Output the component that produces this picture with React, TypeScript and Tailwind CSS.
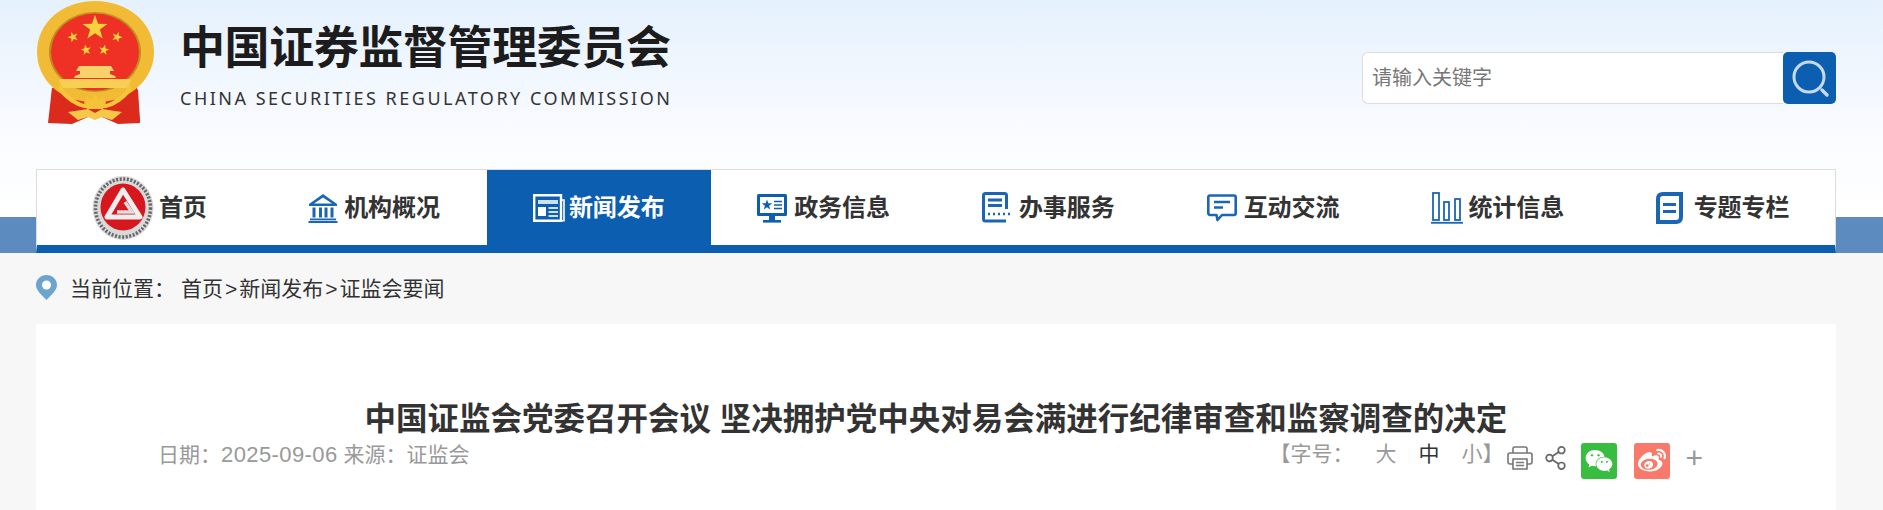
import React from "react";
import { FaWeixin, FaWeibo } from "react-icons/fa";

const BLUE = "#0c5eb0";

function starPoints(cx: number, cy: number, r: number, rot = 0) {
  const pts: string[] = [];
  for (let i = 0; i < 10; i++) {
    const rad = i % 2 === 0 ? r : r * 0.4;
    const a = ((-90 + rot + i * 36) * Math.PI) / 180;
    pts.push(`${(cx + rad * Math.cos(a)).toFixed(1)},${(cy + rad * Math.sin(a)).toFixed(1)}`);
  }
  return pts.join(" ");
}

function Emblem() {
  return (
    <svg width="119" height="124" viewBox="36 0 119 124" className="shrink-0">
      <path d="M52 88 L48 123 L72 124 L95 114 L118 124 L140 123 L137 88 Z" fill="#dc2a1c" />
      <path d="M95 1 C127 1 154 22 154 52 C154 74 138 92 118 99 L95 104 L72 99 C52 92 37 74 37 52 C37 22 63 1 95 1 Z" fill="#f2bb35" />
      <ellipse cx="95" cy="52" rx="46" ry="40" fill="#bf8d22" />
      <ellipse cx="95" cy="52" rx="44" ry="38.5" fill="#ee3124" />
      <polygon points={starPoints(95, 28, 13)} fill="#f8d23c" />
      <polygon points={starPoints(73, 37, 5.5, -20)} fill="#f8d23c" />
      <polygon points={starPoints(117, 37, 5.5, 20)} fill="#f8d23c" />
      <polygon points={starPoints(86, 50, 5.5, -10)} fill="#f8d23c" />
      <polygon points={starPoints(104, 50, 5.5, 10)} fill="#f8d23c" />
      <path d="M79 66 L111 66 L114 71 L110 71 L110 74 L115 76 L116 78 L74 78 L75 76 L80 74 L80 71 L76 71 Z" fill="#f7d16a" />
      <path d="M60 79 H130 L131 81 L127 88 H63 L59 81 Z" fill="#f7cf55" />
      <path d="M60 84 Q68 98 84 104 H106 Q122 98 130 84 L132 90 Q120 105 106 108 H84 Q70 105 58 90 Z" fill="#f6c53a" />
      <path d="M52 89 Q60 101 76 107 L70 122 L50 122 Z" fill="#dc2a1c" />
      <path d="M138 89 Q130 101 114 107 L120 122 L140 122 Z" fill="#dc2a1c" />
      <path d="M84 103 L87 97 L91 100 L95 95 L99 100 L103 97 L106 103 L103 109 H87 Z" fill="#f5c23a" />
      <path d="M68 112 L88 109 L95 113 L102 109 L122 112 L112 120 L102 117 L95 120 L88 117 L78 120 Z" fill="#f5c84a" />
    </svg>
  );
}

function SealIcon() {
  return (
    <svg width="62" height="64" viewBox="0 0 62 64" className="shrink-0">
      <ellipse cx="31" cy="32" rx="30.5" ry="32" fill="#d9d9d9" />
      <ellipse cx="31" cy="32" rx="27.5" ry="29" fill="none" stroke="#666" strokeWidth="3.5" strokeDasharray="2 1.6" />
      <ellipse cx="31" cy="31" rx="22.5" ry="23.5" fill="#d7161e" />
      <path d="M31 14 L48 41 L15 41 Z" fill="none" stroke="#eeeeee" strokeWidth="5" strokeLinejoin="round" />
      <path d="M33 26 L40 36 H25" fill="none" stroke="#dcdcdc" strokeWidth="3.5" />
    </svg>
  );
}

function IconBank() {
  return (
    <svg width="30" height="30" viewBox="0 0 30 30" className="shrink-0" fill="#1a66b5">
      <path d="M15 1 L29 11 V13 H1 V11 Z M15 4.5 L6 10.5 H24 Z" fillRule="evenodd" />
      <rect x="4.5" y="14.5" width="3" height="10" />
      <rect x="11" y="14.5" width="3" height="10" />
      <rect x="16.5" y="14.5" width="3" height="10" />
      <rect x="22.5" y="14.5" width="3" height="10" />
      <rect x="2" y="25.5" width="26" height="1.8" />
      <rect x="0.5" y="28" width="29" height="2" />
    </svg>
  );
}

function IconNews() {
  return (
    <svg width="32" height="28" viewBox="0 0 32 28" className="shrink-0" fill="none" stroke="#fff">
      <path d="M1.2 1.2 H28 V26.8 H1.2 Z" strokeWidth="2.4" />
      <path d="M28 6 H31 V26.8 H28" strokeWidth="1.6" />
      <rect x="5" y="6" width="20" height="4" fill="#cfe0f2" stroke="none" />
      <rect x="5" y="13" width="8" height="9" fill="#fff" stroke="none" />
      <path d="M15.5 14 H25 M15.5 18 H25 M15.5 22 H25" strokeWidth="2" stroke="#cfe0f2" />
    </svg>
  );
}

function IconGov() {
  return (
    <svg width="30" height="30" viewBox="0 0 30 30" className="shrink-0">
      <rect x="0" y="1" width="30" height="22" rx="1.5" fill={BLUE} />
      <rect x="3" y="4" width="24" height="16" fill="#fff" />
      <polygon points={starPoints(10, 12, 5.5)} fill={BLUE} />
      <path d="M17 8.5 H25 M17 12 H25 M17 15.5 H25" stroke={BLUE} strokeWidth="1.7" />
      <rect x="12" y="23" width="6" height="4" fill={BLUE} />
      <rect x="6" y="27" width="18" height="2.6" fill={BLUE} />
    </svg>
  );
}

function IconService() {
  return (
    <svg width="30" height="31" viewBox="0 0 30 31" className="shrink-0" fill="none">
      <path d="M24.5 17 V3.5 Q24.5 1.5 22.5 1.5 H3.5 Q1.5 1.5 1.5 3.5 V27 Q1.5 29 3.5 29 H24" stroke="#1a66b5" strokeWidth="3" />
      <path d="M6 8 H20 M6 13.5 H20" stroke="#1a66b5" strokeWidth="3" />
      <path d="M6 22 H8 M11 22 H13 M16 22 H18 M21 22 H23 M26 22 H28" stroke="#1a66b5" strokeWidth="2.6" />
    </svg>
  );
}

function IconChat() {
  return (
    <svg width="30" height="28" viewBox="0 0 30 28" className="shrink-0" fill="none">
      <path d="M3 1.5 H27 Q28.7 1.5 28.7 3.2 V19 Q28.7 21 27 21 H15 L10.5 26 L9.5 21 H3 Q1.3 21 1.3 19 V3.2 Q1.3 1.5 3 1.5 Z" stroke="#1a66b5" strokeWidth="2.6" strokeLinejoin="round" />
      <path d="M7 8 H23 M7 13.5 H16" stroke="#1a66b5" strokeWidth="2.4" />
    </svg>
  );
}

function IconStats() {
  return (
    <svg width="32" height="32" viewBox="0 0 32 32" className="shrink-0" fill="none" stroke="#1a66b5">
      <rect x="2" y="1" width="6" height="27" strokeWidth="1.8" />
      <rect x="13" y="10" width="5" height="18" strokeWidth="1.8" />
      <rect x="24" y="7" width="5" height="21" strokeWidth="1.8" />
      <path d="M0 30.8 H32" strokeWidth="1.8" />
    </svg>
  );
}

function IconDoc() {
  return (
    <svg width="27" height="32" viewBox="0 0 27 32" className="shrink-0" fill="none">
      <path d="M7 2 H25 V25 Q25 30 20 30 H2 V7 Q2 2 7 2 Z" stroke="#1a66b5" strokeWidth="4" />
      <path d="M7 12.5 H20 M7 19.5 H20" stroke="#1a66b5" strokeWidth="3" />
    </svg>
  );
}

function PinIcon() {
  return (
    <svg width="21" height="25" viewBox="0 0 21 25" className="shrink-0">
      <path d="M10.5 0 C4.5 0 0 4.5 0 10 C0 16 7 21 10.5 25 C14 21 21 16 21 10 C21 4.5 16.5 0 10.5 0 Z" fill="#6da3cf" />
      <circle cx="10.5" cy="10" r="4.5" fill="#ffffff" />
    </svg>
  );
}

function PrinterIcon() {
  return (
    <svg width="26" height="24" viewBox="0 0 26 24" fill="none" stroke="#777" strokeWidth="1.6" className="shrink-0">
      <path d="M6 7 V2.5 Q6 1 7.5 1 H18.5 Q20 1 20 2.5 V7" />
      <path d="M6 18 H3 Q1 18 1 16 V9 Q1 7 3 7 H23 Q25 7 25 9 V16 Q25 18 23 18 H20" />
      <path d="M6 13 H20 V23 H6 Z M9 16.5 H17 M9 19.5 H17" />
    </svg>
  );
}

function ShareIcon() {
  return (
    <svg width="21" height="24" viewBox="0 0 21 24" fill="none" stroke="#666" strokeWidth="1.7" className="shrink-0">
      <circle cx="4.5" cy="12" r="3.3" />
      <circle cx="16.5" cy="4.2" r="3.3" />
      <circle cx="16.5" cy="19.8" r="3.3" />
      <path d="M7.4 10.2 L13.7 6 M7.4 13.8 L13.7 18" />
    </svg>
  );
}

const navItems: { label: string; icon: React.ReactNode; gap: string }[] = [
  { label: "首页", icon: <SealIcon />, gap: "gap-[5px]" },
  { label: "机构概况", icon: <IconBank />, gap: "gap-[6px]" },
  { label: "新闻发布", icon: <IconNews />, gap: "gap-[4px]" },
  { label: "政务信息", icon: <IconGov />, gap: "gap-[7px]" },
  { label: "办事服务", icon: <IconService />, gap: "gap-[7px]" },
  { label: "互动交流", icon: <IconChat />, gap: "gap-[7px]" },
  { label: "统计信息", icon: <IconStats />, gap: "gap-[5px]" },
  { label: "专题专栏", icon: <IconDoc />, gap: "gap-[11px]" },
];

export default function App() {
  return (
    <div className="h-[510px] overflow-hidden bg-[#f7f7f7] font-['Liberation_Sans','Noto_Sans_CJK_SC',sans-serif] text-[#333]">
      <header className="h-[253px] pl-[36px] pr-[47px] bg-[linear-gradient(to_bottom,#e5f1fd_0,#f9fbff_130px,#ffffff_217px,#5c8bbf_217px,#5c8bbf_253px)]">
        <div className="flex h-[169px] items-start justify-between">
          <div className="flex items-start">
            <Emblem />
            <div className="ml-[25px] flex flex-col">
              <div className="mt-[15px] text-[45px] leading-[60px] tracking-[-0.4px] font-bold text-[#1c1c1c] font-['Noto_Sans_CJK_SC',sans-serif] whitespace-nowrap">
                中国证券监督管理委员会
              </div>
              <div className="mt-[11px] text-[18px] leading-[24px] tracking-[2.5px] text-[#333] font-['Noto_Sans',sans-serif] whitespace-nowrap">
                CHINA SECURITIES REGULATORY COMMISSION
              </div>
            </div>
          </div>
          <div className="mt-[52px] flex h-[52px] w-[474px]">
            <div className="flex flex-1 items-center rounded-l-[6px] border border-r-0 border-[#dcdcdc] bg-white pl-[9px] text-[20px] text-[#777]">
              请输入关键字
            </div>
            <div className="flex w-[53px] items-center justify-center rounded-[5px] bg-[#0c5eb0]">
              <svg width="40" height="40" viewBox="0 0 40 40" fill="none">
                <circle cx="19" cy="19" r="15" stroke="#c6d9ee" strokeWidth="3" />
                <path d="M32 32 L37 37" stroke="#c6d9ee" strokeWidth="3.5" strokeLinecap="round" />
              </svg>
            </div>
          </div>
        </div>
        <nav className="flex h-[84px] border-x border-t border-[#dcdcdc] bg-white border-b-[8px] border-b-[#0c5eb0]">
          {navItems.map((item, i) => (
            <a
              key={item.label}
              className={`flex flex-1 items-center justify-center text-[24px] font-bold ${item.gap} ${i === 2 ? "bg-[#0c5eb0] text-white" : "text-[#333]"}`}
            >
              {item.icon}
              <span className="whitespace-nowrap">{item.label}</span>
            </a>
          ))}
        </nav>
      </header>

      <div className="flex h-[71px] items-start px-[36px] pt-[22px] text-[21px] leading-[28px] text-[#333]">
        <PinIcon />
        <span className="ml-[13px]">当前位置：</span>
        <span className="ml-[6px]">
          首页<span className="mx-[2px]">&gt;</span>新闻发布<span className="mx-[2px]">&gt;</span>证监会要闻
        </span>
      </div>

      <main className="ml-[36px] mr-[47px] h-[300px] bg-white pt-[75px]">
        <h1 className="text-center text-[31.5px] leading-[40px] font-bold text-[#333]">
          中国证监会党委召开会议 坚决拥护党中央对易会满进行纪律审查和监察调查的决定
        </h1>
        <div className="flex h-[30px] items-center justify-between pl-[122px] pr-[133px] text-[21px] text-[#999]">
          <span>
            日期：<span className="text-[22px] tracking-[0.4px]">2025-09-06</span> 来源：证监会
          </span>
          <div className="flex items-center">
            <span>【字号：</span>
            <span className="ml-[22px]">大</span>
            <span className="ml-[22px] text-[#333]">中</span>
            <span className="ml-[22px]">小</span>
            <span>】</span>
            <span className="ml-[4px] translate-y-[4px]"><PrinterIcon /></span>
            <span className="ml-[12px] translate-y-[4px]"><ShareIcon /></span>
            <span className="ml-[15px] flex h-[36px] w-[36px] translate-y-[7px] items-center justify-center rounded-[3px] bg-[#38bd41] text-white"><FaWeixin size={28} /></span>
            <span className="ml-[17px] flex h-[36px] w-[36px] translate-y-[7px] items-center justify-center rounded-[3px] bg-[#f9796a] text-white"><FaWeibo size={28} /></span>
            <span className="ml-[15px] translate-y-[4px] text-[30px] leading-[30px] font-light text-[#999]">+</span>
          </div>
        </div>
      </main>
    </div>
  );
}
